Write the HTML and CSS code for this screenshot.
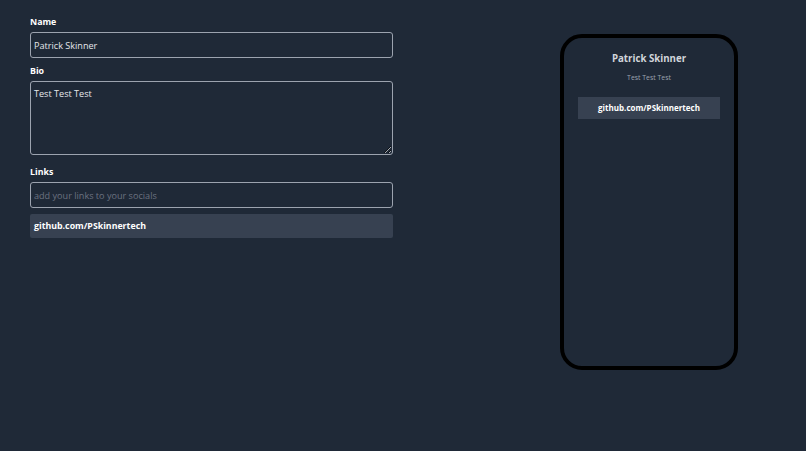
FILE: index.html
```html
<!DOCTYPE html>
<html>
<head>
<meta charset="utf-8">
<link rel="stylesheet" href="styles.css">
</head>
<body>
<div class="page">
  <div class="form">
    <label class="label">Name</label>
    <input class="field" type="text" value="Patrick Skinner">
    <label class="label label-bio">Bio</label>
    <textarea class="area">Test Test Test</textarea>
    <label class="label label-links">Links</label>
    <input class="field" type="text" placeholder="add your links to your socials">
    <div class="link-row">github.com/PSkinnertech</div>
  </div>
  <div class="phone">
    <div class="phone-name">Patrick Skinner</div>
    <div class="phone-bio">Test Test Test</div>
    <div class="phone-link">github.com/PSkinnertech</div>
  </div>
</div>
</body>
</html>
```
FILE: styles.css
```css
html, body {
  margin: 0;
  padding: 0;
  background: #1f2937;
  height: 100%;
}
body {
  font-family: "Open Sans", "Liberation Sans", sans-serif;
  color: #ffffff;
}
.page {
  display: flex;
  align-items: flex-start;
  padding: 14px 0 0 30px;
}
.form {
  width: 363px;
  display: flex;
  flex-direction: column;
}
.label {
  display: block;
  font-size: 8.8px;
  font-weight: 700;
  line-height: 16px;
  height: 16px;
  margin-bottom: 2px;
  color: #ffffff;
}
.label-bio {
  margin-top: 5px;
}
.label-links {
  margin-top: 9px;
}
.field {
  box-sizing: border-box;
  height: 26px;
  width: 100%;
  margin: 0;
  border: 1px solid #9ca3af;
  border-radius: 3px;
  background: transparent;
  padding: 0 3px;
  font-family: inherit;
  font-size: 9.1px;
  font-weight: 500;
  color: #e5e7eb;
  outline: none;
}
.field::placeholder {
  color: #6b7280;
  font-weight: 400;
}
.area {
  box-sizing: border-box;
  display: block;
  height: 74px;
  width: 100%;
  margin: 0;
  border: 1px solid #9ca3af;
  border-radius: 3px;
  background: transparent;
  padding: 5px 3px;
  font-family: inherit;
  font-size: 9.1px;
  font-weight: 500;
  line-height: 13px;
  color: #e5e7eb;
  resize: vertical;
  outline: none;
}
.link-row {
  margin-top: 6px;
  height: 24px;
  line-height: 24px;
  background: #374151;
  border-radius: 2px;
  padding-left: 4px;
  font-size: 8.8px;
  font-weight: 700;
  color: #ffffff;
}
.phone {
  box-sizing: border-box;
  margin-left: 167px;
  margin-top: 20px;
  width: 178px;
  height: 336px;
  border: 4px solid #000000;
  border-radius: 22px;
  display: flex;
  flex-direction: column;
  align-items: center;
  padding-top: 14px;
}
.phone-name {
  font-size: 9.7px;
  font-weight: 700;
  line-height: 14px;
  color: #d1d5db;
}
.phone-bio {
  margin-top: 7px;
  font-size: 6.9px;
  line-height: 10px;
  color: #9ca3af;
}
.phone-link {
  margin-top: 14px;
  width: 142px;
  height: 22px;
  line-height: 22px;
  text-align: center;
  background: #374151;
  font-size: 8px;
  font-weight: 700;
  color: #ffffff;
}
```
